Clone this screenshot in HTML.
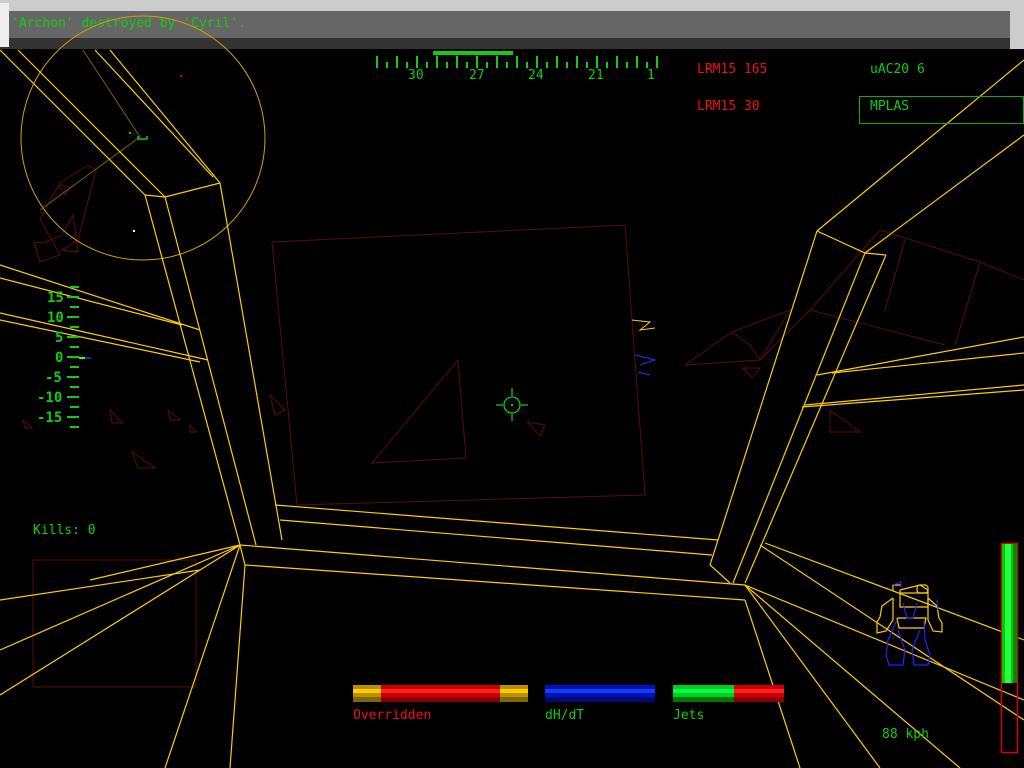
<!DOCTYPE html>
<html><head><style>
html,body{margin:0;padding:0;background:#000;width:1024px;height:768px;overflow:hidden}
svg{position:absolute;left:0;top:0}
text{font-family:"DejaVu Sans Mono","Liberation Mono",monospace}
</style></head><body>
<svg width="1024" height="768" viewBox="0 0 1024 768">
<rect width="1024" height="768" fill="#000"/>
<rect x="0" y="0" width="1024" height="11" fill="#cccccc"/>
<rect x="0" y="11" width="1024" height="27" fill="#666"/>
<rect x="0" y="38" width="1024" height="11" fill="#333"/>
<rect x="0" y="3" width="9" height="44" fill="#eee"/>
<rect x="1010" y="11" width="14" height="38" fill="#ccc"/>
<text x="11" y="27" fill="#11cc11" font-size="13">'Archon' destroyed by 'Cyril'.</text>

<g fill="none" stroke="#5a0c0c" stroke-width="1">
<polygon points="272,242 625,225 645,495 297,505"/>
<polygon points="458,360 466,458 372,463"/>
<polyline points="88,165 96,170 78,240 62,250 78,252 73,215 62,235 43,243 34,242 40,262 60,255 40,219 60,183 88,165"/>
<polyline points="58,185 70,187 65,195 58,185"/>
<polyline points="685,365 732,332 790,310 760,360 685,365"/>
<polyline points="732,332 750,345 760,360"/>
<polyline points="880,230 980,262 1024,280"/>
<polyline points="880,230 810,310 760,360"/>
<polyline points="980,262 955,345"/>
<polyline points="810,310 945,345"/>
<polyline points="905,240 885,310"/>
<polygon points="830,410 860,432 830,432"/>
<polygon points="132,452 155,468 138,468"/>
<polygon points="110,410 123,423 112,423"/>
<polygon points="168,410 180,420 170,420"/>
<polygon points="527,422 545,425 540,436"/>
<polygon points="270,395 285,410 275,415"/>
<polygon points="23,420 32,428 25,428"/>
<polygon points="190,425 196,432 190,432"/>
<polygon points="743,368 760,368 752,378"/>
<rect x="33" y="560" width="163" height="127"/>
</g>

<circle cx="143" cy="138" r="122" fill="none" stroke="#d4a000" stroke-width="1"/>
<polyline points="83,50 140,137 40,210" fill="none" stroke="#7a6000"/>
<rect x="180" y="75" width="2" height="2" fill="#e00"/>
<rect x="129" y="132" width="2" height="2" fill="#11cc11"/>
<path d="M138 136v3h9v-3" fill="none" stroke="#11cc11" stroke-width="1.5"/>
<rect x="133" y="230" width="2" height="2" fill="#fff"/>

<g fill="none" stroke="#ffcc00" stroke-width="1.2">
<polyline points="145,195 165,197 220,183"/>
<line x1="145" y1="195" x2="240" y2="545"/>
<line x1="165" y1="197" x2="256" y2="545"/>
<line x1="220" y1="183" x2="282" y2="540"/>
<line x1="0" y1="50" x2="145" y2="195"/>
<line x1="18" y1="50" x2="165" y2="197"/>
<line x1="95" y1="50" x2="213" y2="177"/>
<line x1="110" y1="50" x2="220" y2="183"/>
<line x1="0" y1="265" x2="200" y2="330"/>
<line x1="0" y1="278" x2="182" y2="325"/>
<line x1="0" y1="313" x2="208" y2="360"/>
<line x1="0" y1="320" x2="200" y2="362"/>
<line x1="240" y1="545" x2="745" y2="585"/>
<line x1="245" y1="565" x2="745" y2="600"/>
<line x1="275" y1="505" x2="718" y2="540"/>
<line x1="280" y1="520" x2="712" y2="555"/>
<line x1="240" y1="545" x2="245" y2="565"/>
<polyline points="817,231 865,253 886,255"/>
<polyline points="817,231 710,565 730,583"/>
<line x1="865" y1="253" x2="733" y2="583"/>
<line x1="886" y1="255" x2="745" y2="583"/>
<line x1="817" y1="231" x2="1024" y2="60"/>
<line x1="865" y1="253" x2="1024" y2="135"/>
<polyline points="817,375 1024,337"/>
<polyline points="832,373 1024,353"/>
<line x1="802" y1="407" x2="1024" y2="390"/>
<line x1="805" y1="405" x2="1024" y2="385"/>
<line x1="240" y1="545" x2="0" y2="650"/>
<line x1="240" y1="545" x2="0" y2="695"/>
<line x1="240" y1="545" x2="165" y2="768"/>
<line x1="245" y1="565" x2="230" y2="768"/>
<line x1="240" y1="545" x2="90" y2="580"/>
<line x1="200" y1="570" x2="0" y2="600"/>
<line x1="745" y1="585" x2="1024" y2="700"/>
<line x1="745" y1="585" x2="880" y2="768"/>
<line x1="745" y1="585" x2="960" y2="768"/>
<line x1="745" y1="600" x2="800" y2="768"/>
<line x1="765" y1="543" x2="1024" y2="640"/>
<line x1="760" y1="545" x2="1024" y2="720"/>
</g>

<g fill="none" stroke="#ffcc00"><polyline points="632,320 650,322 640,330 655,328"/></g>
<g fill="none" stroke="#2233ff"><polyline points="635,355 655,360 640,365"/><polyline points="638,372 650,375"/></g>

<g stroke="#11cc11" fill="none" stroke-width="1.3">
<circle cx="512" cy="405" r="8"/>
<line x1="512" y1="388" x2="512" y2="396"/>
<line x1="512" y1="414" x2="512" y2="421"/>
<line x1="496" y1="405" x2="503" y2="405"/>
<line x1="521" y1="405" x2="528" y2="405"/>
</g>
<rect x="511" y="404" width="2" height="2" fill="#11cc11"/>

<rect x="433" y="51" width="80" height="4" fill="#11cc11"/>
<g stroke="#11cc11" stroke-width="2">
<line x1="377" y1="56" x2="377" y2="68"/><line x1="387" y1="62" x2="387" y2="68"/>
<line x1="397" y1="56" x2="397" y2="68"/><line x1="407" y1="62" x2="407" y2="68"/>
<line x1="417" y1="56" x2="417" y2="68"/><line x1="427" y1="62" x2="427" y2="68"/>
<line x1="437" y1="56" x2="437" y2="68"/><line x1="447" y1="62" x2="447" y2="68"/>
<line x1="457" y1="56" x2="457" y2="68"/><line x1="467" y1="62" x2="467" y2="68"/>
<line x1="477" y1="56" x2="477" y2="68"/><line x1="487" y1="62" x2="487" y2="68"/>
<line x1="497" y1="56" x2="497" y2="68"/><line x1="507" y1="62" x2="507" y2="68"/>
<line x1="517" y1="56" x2="517" y2="68"/><line x1="527" y1="62" x2="527" y2="68"/>
<line x1="537" y1="56" x2="537" y2="68"/><line x1="547" y1="62" x2="547" y2="68"/>
<line x1="557" y1="56" x2="557" y2="68"/><line x1="567" y1="62" x2="567" y2="68"/>
<line x1="577" y1="56" x2="577" y2="68"/><line x1="587" y1="62" x2="587" y2="68"/>
<line x1="597" y1="56" x2="597" y2="68"/><line x1="607" y1="62" x2="607" y2="68"/>
<line x1="617" y1="56" x2="617" y2="68"/><line x1="627" y1="62" x2="627" y2="68"/>
<line x1="637" y1="56" x2="637" y2="68"/><line x1="647" y1="62" x2="647" y2="68"/>
<line x1="657" y1="56" x2="657" y2="68"/>
</g>
<g fill="#11cc11" font-size="13">
<text x="408" y="79">30</text><text x="469" y="79">27</text><text x="528" y="79">24</text>
<text x="588" y="79">21</text><text x="647" y="79">1</text>
</g>

<g font-size="13">
<text x="697" y="73" fill="#ee1111">LRM15 165</text>
<text x="697" y="110" fill="#ee1111">LRM15 30</text>
<text x="870" y="73" fill="#11cc11">uAC20 6</text>
<text x="870" y="110" fill="#11cc11">MPLAS</text>
</g>
<rect x="859.5" y="96.5" width="164" height="27" fill="none" stroke="#11aa11"/>

<g fill="#11cc11" font-size="14" font-weight="bold">
<text x="47" y="302">15</text><text x="47" y="322">10</text><text x="55" y="342">5</text>
<text x="55" y="362">0</text><text x="45" y="382">-5</text><text x="37" y="402">-10</text><text x="37" y="422">-15</text>
</g>
<g stroke="#11cc11" stroke-width="2">
<line x1="70" y1="287" x2="79" y2="287"/><line x1="67" y1="297" x2="79" y2="297"/>
<line x1="70" y1="307" x2="79" y2="307"/><line x1="67" y1="317" x2="79" y2="317"/>
<line x1="70" y1="327" x2="79" y2="327"/><line x1="67" y1="337" x2="79" y2="337"/>
<line x1="70" y1="347" x2="79" y2="347"/><line x1="67" y1="357" x2="79" y2="357"/>
<line x1="70" y1="367" x2="79" y2="367"/><line x1="67" y1="377" x2="79" y2="377"/>
<line x1="70" y1="387" x2="79" y2="387"/><line x1="67" y1="397" x2="79" y2="397"/>
<line x1="70" y1="407" x2="79" y2="407"/><line x1="67" y1="417" x2="79" y2="417"/>
<line x1="70" y1="427" x2="79" y2="427"/>
</g>
<rect x="79" y="357" width="6" height="2" fill="#33ff33"/><rect x="85" y="357" width="6" height="2" fill="#2222cc"/>

<text x="33" y="534" fill="#11cc11" font-size="13">Kills: 0</text>

<rect x="353" y="685" width="28" height="17" fill="#b89000"/>
<rect x="353" y="689" width="28" height="4" fill="#ffcc00"/>
<rect x="353" y="697" width="28" height="5" fill="#806800"/>
<rect x="381" y="685" width="119" height="17" fill="#cc0000"/>
<rect x="381" y="689" width="119" height="4" fill="#ff2222"/>
<rect x="381" y="697" width="119" height="5" fill="#880000"/>
<rect x="500" y="685" width="28" height="17" fill="#b89000"/>
<rect x="500" y="689" width="28" height="4" fill="#ffcc00"/>
<rect x="500" y="697" width="28" height="5" fill="#806800"/>
<rect x="545" y="685" width="110" height="17" fill="#0010c0"/>
<rect x="545" y="689" width="110" height="4" fill="#1040ee"/>
<rect x="545" y="697" width="110" height="5" fill="#000a70"/>
<rect x="673" y="685" width="61" height="17" fill="#00cc22"/>
<rect x="673" y="689" width="61" height="4" fill="#00ff44"/>
<rect x="673" y="697" width="61" height="5" fill="#007700"/>
<rect x="734" y="685" width="50" height="17" fill="#cc0000"/>
<rect x="734" y="689" width="50" height="4" fill="#ff2222"/>
<rect x="734" y="697" width="50" height="5" fill="#880000"/>
<g font-size="13">
<text x="353" y="719" fill="#ee1111">Overridden</text>
<text x="545" y="719" fill="#11cc11">dH/dT</text>
<text x="673" y="719" fill="#11cc11">Jets</text>
<text x="882" y="738" fill="#11cc11">88 kph</text>
</g>

<!-- mech diagram -->
<g fill="none" stroke="#ffcc00" stroke-width="1.2">
<polyline points="893,591 893,585 901,585"/>
<polyline points="900,590 900,607 928,607 928,590 920,585 900,590"/>
<rect x="917" y="585" width="11" height="8" rx="3"/>
<line x1="900" y1="593" x2="928" y2="593"/>
<polyline points="893,598 882,606 880,617 877,622 877,633 886,631 893,620 893,598"/>
<polyline points="928,598 937,606 939,618 942,623 942,632 933,631 928,620 928,598"/>
<polyline points="897,618 899,628 924,628 926,618 897,618"/>
</g>
<g fill="none" stroke="#2222ff" stroke-width="1.2">
<polyline points="893,585 901,582 901,587"/>
<polyline points="903,603 907,618 913,618 917,603"/>
<polyline points="897,620 888,640 886,655 889,665 903,665 905,650 898,630"/>
<polyline points="924,620 925,640 930,655 928,665 914,665 912,650 920,630"/>
<line x1="937" y1="600" x2="938" y2="610"/>
</g>
<rect x="1001.5" y="543.5" width="16" height="209" fill="none" stroke="#dd0000" stroke-width="1.5"/>
<rect x="1002" y="544" width="15" height="139" fill="#00cc00"/>
<rect x="1005" y="544" width="6" height="139" fill="#22ff44"/>
<rect x="1013" y="544" width="4" height="139" fill="#008800"/>
</svg>
</body></html>
